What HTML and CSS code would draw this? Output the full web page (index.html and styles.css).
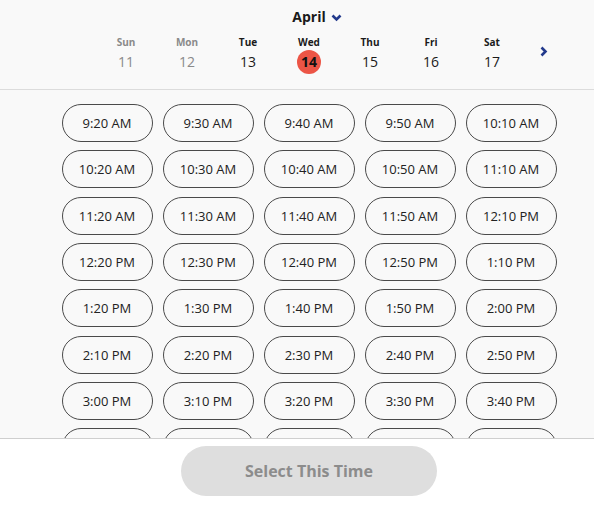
FILE: index.html
```html
<!DOCTYPE html>
<html lang="en">
<head>
<meta charset="UTF-8">
<meta name="viewport" content="width=device-width, initial-scale=1.0">
<title>Pick a time</title>
<link rel="stylesheet" href="styles.css">
</head>
<body>
<div class="picker">
  <div class="week">
    <div class="month">
      <span class="month-name">April
        <svg class="caret" width="11" height="8" viewBox="0 0 11 8"><path d="M1.5 1.5 L5.5 5.5 L9.5 1.5" fill="none" stroke="#233a8c" stroke-width="2.6"/></svg>
      </span>
    </div>
    <div class="days">
      <div class="day past"><span class="dname">Sun</span><span class="dnum">11</span></div>
      <div class="day past"><span class="dname">Mon</span><span class="dnum">12</span></div>
      <div class="day"><span class="dname">Tue</span><span class="dnum">13</span></div>
      <div class="day active"><span class="dname">Wed</span><span class="dnum">14</span></div>
      <div class="day"><span class="dname">Thu</span><span class="dnum">15</span></div>
      <div class="day"><span class="dname">Fri</span><span class="dnum">16</span></div>
      <div class="day"><span class="dname">Sat</span><span class="dnum">17</span></div>
      <button class="next">
        <svg width="8" height="11" viewBox="0 0 8 11"><path d="M1.5 1.5 L5.5 5.5 L1.5 9.5" fill="none" stroke="#233a8c" stroke-width="2.6"/></svg>
      </button>
    </div>
  </div>

  <div class="slots">
    <div class="grid" id="grid"></div>
  </div>

  <div class="footer">
    <button class="select" disabled>Select This Time</button>
  </div>
</div>

<script>
  // time slots for the selected day
  var times = [
    '9:20 AM', '9:30 AM', '9:40 AM', '9:50 AM', '10:10 AM',
    '10:20 AM', '10:30 AM', '10:40 AM', '10:50 AM', '11:10 AM',
    '11:20 AM', '11:30 AM', '11:40 AM', '11:50 AM', '12:10 PM',
    '12:20 PM', '12:30 PM', '12:40 PM', '12:50 PM', '1:10 PM',
    '1:20 PM', '1:30 PM', '1:40 PM', '1:50 PM', '2:00 PM',
    '2:10 PM', '2:20 PM', '2:30 PM', '2:40 PM', '2:50 PM',
    '3:00 PM', '3:10 PM', '3:20 PM', '3:30 PM', '3:40 PM',
    '3:50 PM', '4:00 PM', '4:10 PM', '4:20 PM', '4:30 PM'
  ];
  var grid = document.getElementById('grid');
  times.forEach(function(t) {
    var b = document.createElement('button');
    b.className = 'slot';
    b.innerText = t;
    grid.appendChild(b);
  });
</script>
</body>
</html>
```

FILE: styles.css
```css
  /* time picker */
  html, body {
    margin: 0;
    height: 100%;
  }
  body {
    font-family: "Open Sans", "Liberation Sans", sans-serif;
    color: #1a1a1a;
    background: #fff;
  }
  .picker {
    display: flex;
    flex-direction: column;
    height: 100vh;
  }

  /* week strip */
  .week {
    height: 90px;
    box-sizing: border-box;
    padding: 7px 0 0 24px;
    background: #f9f9f9;
    border-bottom: 1px solid #dcdcdc;
  }
  .month {
    text-align: center;
    font-size: 14px;
    font-weight: 700;
    line-height: 20px;
  }
  .month-name {
    position: relative;
  }
  .caret {
    position: absolute;
    left: 100%;
    top: 7px;
    margin-left: 5px;
  }
  .days {
    position: relative;
    display: flex;
    justify-content: center;
    margin-top: 7px;
  }
  .day {
    width: 61px;
    display: flex;
    flex-direction: column;
    align-items: center;
  }
  .dname {
    font-size: 10px;
    font-weight: 700;
    line-height: 16px;
  }
  .dnum {
    width: 24px;
    height: 24px;
    border-radius: 50%;
    font-size: 14px;
    line-height: 24px;
    text-align: center;
  }
  .past .dname,
  .past .dnum {
    color: #8a8a8a;
  }
  .active .dnum {
    background: #ec5546;
    font-weight: 700;
    color: #111;
  }
  .next {
    position: absolute;
    left: 516px;
    top: 11px;
    background: none;
    border: 0;
    padding: 0;
  }

  /* slot list */
  .slots {
    flex: 1;
    overflow: hidden;
    background: #f9f9f9;
    padding: 14px 0 0 24px;
  }
  .grid {
    display: grid;
    grid-template-columns: repeat(5, 91px);
    column-gap: 10px;
    row-gap: 8.35px;
    justify-content: center;
  }
  .slot {
    height: 38px;
    border: 1px solid #4a4a4a;
    border-radius: 19px;
    background: transparent;
    font-family: inherit;
    font-size: 13px;
    color: #222;
    padding: 0;
  }

  /* footer */
  .footer {
    border-top: 1px solid #cfcfcf;
    padding: 7px 0 11px 24px;
    display: flex;
    justify-content: center;
    background: #fff;
  }
  .select {
    width: 256px;
    height: 50px;
    border: 0;
    border-radius: 25px;
    background: #dedede;
    color: #8c8c8c;
    font-family: inherit;
    font-size: 16px;
    font-weight: 700;
  }
```
